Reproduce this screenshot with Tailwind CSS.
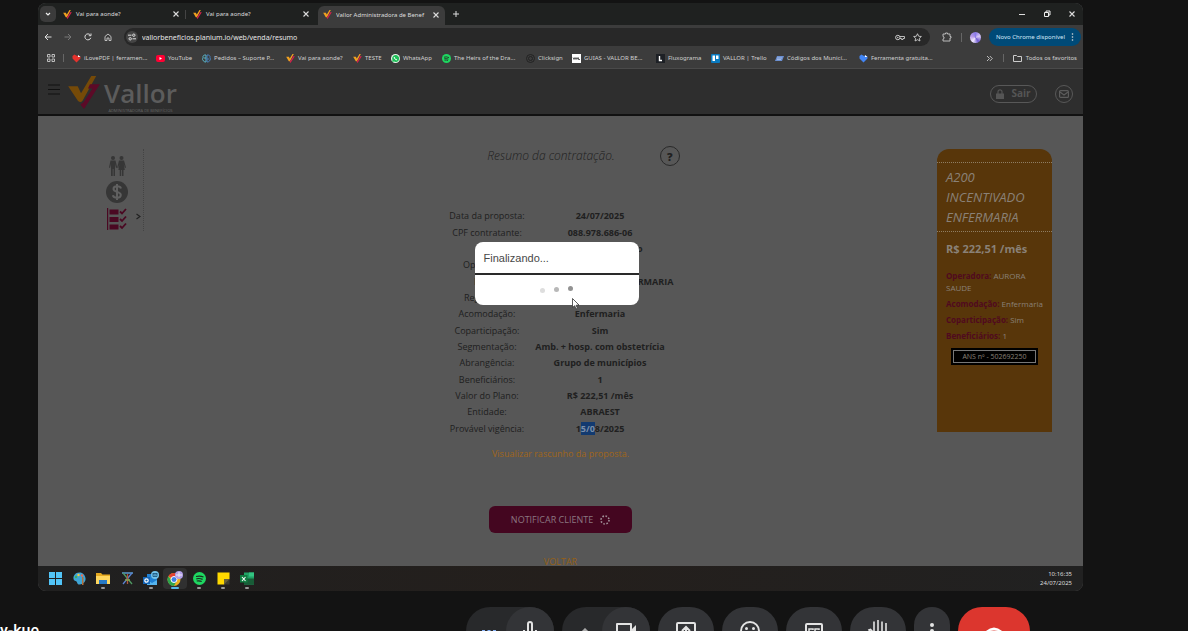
<!DOCTYPE html>
<html lang="pt-BR">
<head>
<meta charset="utf-8">
<title>Vallor Administradora de Benefícios</title>
<script src="https://cdn.jsdelivr.net/npm/@tailwindcss/browser@4"></script>
</head>
<body class="flex h-screen flex-col overflow-hidden bg-[#131313] pt-[3px] font-['Noto_Sans',sans-serif] text-[#dcdcdc]">
<svg class="hidden">
  <symbol id="vallor" viewBox="0 0 96 100"><path fill="#f0a020" d="M0 31H30L40 50L70 0H85L42 80H29Z"/><path fill="#d3204c" d="M64 25H96L48 100L38 85L72 38Z"/></symbol>
  <symbol id="x" viewBox="0 0 8 8"><path d="M1.500 1.500L6.500 6.500M6.500 1.500L1.500 6.500" stroke="currentColor" stroke-width="1.100"/></symbol>
</svg>

<main class="relative mr-[105px] ml-[38px] flex min-h-0 flex-1 flex-col overflow-hidden rounded-lg bg-[#575757]">
  <!-- Tab strip -->
  <div class="flex h-[22px] shrink-0 items-center bg-[#1f2120] pl-[2px] text-[6px] leading-none">
    <button aria-label="Pesquisar guias" class="flex size-4 items-center justify-center rounded-[5px] bg-[#3b3b3b]"><svg class="size-[6px]" viewBox="0 0 6 6"><path d="M1 2l2 2 2-2" fill="none" stroke="#eee" stroke-width="1.200"/></svg></button>
    <div class="flex w-[130px] items-center gap-[4px] pl-[7px]"><svg class="size-[9px]"><use href="#vallor"/></svg><span class="flex-1">Vai para aonde?</span><button aria-label="Fechar guia" class="mr-px size-2"><svg class="size-2"><use href="#x"/></svg></button><span class="h-[9px] w-px bg-[#444]"></span></div>
    <div class="flex w-[130px] items-center gap-[4px] pl-[7px]"><svg class="size-[9px]"><use href="#vallor"/></svg><span class="flex-1">Vai para aonde?</span><button aria-label="Fechar guia" class="mr-[6px] size-2"><svg class="size-2"><use href="#x"/></svg></button></div>
    <div class="mt-[3px] ml-[2px] flex h-[19px] w-[127px] items-center gap-[4px] rounded-t-md bg-[#3c3c3c] pr-[5px] pb-[2px] pl-[5px]"><svg class="size-[9px] shrink-0"><use href="#vallor"/></svg><span class="flex-1 overflow-hidden py-px whitespace-nowrap">Vallor Administradora de Benef</span><button aria-label="Fechar guia" class="size-2"><svg class="size-2"><use href="#x"/></svg></button></div>
    <button aria-label="Nova guia" class="ml-[7px] size-2"><svg class="size-2" viewBox="0 0 8 8"><path d="M4 1v6M1 4h6" stroke="#ddd"/></svg></button>
    <div class="mr-[7px] ml-auto flex items-center gap-[17px]">
      <button aria-label="Minimizar" class="size-2"><svg class="size-2" viewBox="0 0 8 8"><path d="M1 4.500h6" stroke="#ddd"/></svg></button>
      <button aria-label="Restaurar" class="size-2"><svg class="size-2" viewBox="0 0 8 8"><path d="M1.500 2.500h4v4h-4zM3 2.500V1h4v4H5.500" fill="none" stroke="#eee"/></svg></button>
      <button aria-label="Fechar" class="size-2"><svg class="size-2"><use href="#x"/></svg></button>
    </div>
  </div>

  <!-- Address bar -->
  <div class="flex h-6 shrink-0 items-center gap-3 bg-[#3c3c3c] pr-[2px] pl-[6px]">
    <button aria-label="Voltar" class="size-2"><svg class="size-2" viewBox="0 0 8 8"><path d="M7.500 4H1M4 1L1 4l3 3" fill="none" stroke="#ddd"/></svg></button>
    <button aria-label="Avançar" class="size-2"><svg class="size-2" viewBox="0 0 8 8"><path d="M.5 4H7M4 1l3 3-3 3" fill="none" stroke="#777"/></svg></button>
    <button aria-label="Atualizar" class="size-2"><svg class="size-2" viewBox="0 0 8 8"><path d="M6.800 4.800A3 3 0 1 1 6.300 2M7 .5v2.200H4.800" fill="none" stroke="#ddd"/></svg></button>
    <button aria-label="Página inicial" class="size-2"><svg class="size-2" viewBox="0 0 8 8"><path d="M1 3.500L4 1l3 2.500v4H5V5H3v2.500H1z" fill="none" stroke="#ccc" stroke-width=".9"/></svg></button>
    <div class="flex h-[18px] flex-1 items-center rounded-full bg-[#282828] pr-2 pl-[2px]">
      <span class="flex size-3 items-center justify-center rounded-full bg-[#444]"><svg class="size-2" viewBox="0 0 8 8"><path d="M0 2.200h3.500M4.500 5.800H8" stroke="#ddd"/><circle cx="5.800" cy="2.200" r="1.200" fill="none" stroke="#ddd"/><circle cx="2.200" cy="5.800" r="1.200" fill="none" stroke="#ddd"/></svg></span>
      <input aria-label="Endereço" value="vallorbeneficios.planium.io/web/venda/resumo" class="ml-1 h-4 flex-1 bg-transparent text-[7px] text-[#e6e6e6] outline-none">
      <svg class="mr-2 h-[7px] w-[10px]" viewBox="0 0 10 7"><circle cx="2.800" cy="3.500" r="2.200" fill="none" stroke="#ccc"/><circle cx="2.800" cy="3.500" r=".7" fill="#ccc"/><path d="M5 2.500h4.500v2H8v1H6.500v-1H5" fill="none" stroke="#ccc" stroke-width=".9"/></svg>
      <svg class="size-[9px]" viewBox="0 0 10 10"><path d="M5 .8l1.300 2.800 3 .3-2.200 2 .6 3L5 7.400 2.300 8.900l.6-3-2.200-2 3-.3z" fill="none" stroke="#ddd" stroke-width=".9"/></svg>
    </div>
    <div class="flex items-center gap-2">
      <button aria-label="Extensões" class="mr-px size-[10px]"><svg class="size-[10px]" viewBox="0 0 10 10"><path d="M1 2h2.500V1h2v1H8v2.500h1v1.500H8v3H1V7l1-.5V5L1 4.500z" fill="none" stroke="#bbb"/></svg></button>
      <span class="h-[9px] w-px bg-[#666]"></span>
      <span class="size-[11px] rounded-full bg-[conic-gradient(#8b7be8,#d9c8f5,#6f5ad0,#f2eaff,#b79be8,#8b7be8)]"></span>
      <button class="flex h-[18px] items-center justify-between gap-[6px] rounded-full bg-[#004a77] px-[7px] text-[6px] text-[#d3e8f8]"><span class="whitespace-nowrap">Novo Chrome disponível</span><svg class="h-2 w-[3px]" viewBox="0 0 3 8" fill="#ddd"><circle cx="1.500" cy="1" r=".8"/><circle cx="1.500" cy="4" r=".8"/><circle cx="1.500" cy="7" r=".8"/></svg></button>
    </div>
  </div>

  <!-- Bookmarks -->
  <nav class="flex h-5 shrink-0 items-center border-b border-[#4a4a4a] bg-[#3c3c3c] pr-[6px] pb-px pl-[9px] text-[6px] whitespace-nowrap text-[#d0d0d0]">
    <svg class="size-2 shrink-0" viewBox="0 0 8 8"><path d="M.5.5h2.500v2.500H.5zM5 .5h2.500v2.500H5zM.5 5h2.500v2.500H.5zM5 5h2.500v2.500H5z" fill="none" stroke="#ccc" stroke-width=".9"/></svg>
    <span class="mx-2 h-2 w-px shrink-0 bg-[#666]"></span>
    <a href="#" class="flex w-[84px] shrink-0 items-center gap-[3px]"><svg class="size-[9px]" viewBox="0 0 9 9"><path d="M4.500 8.500L.5 4.500V2L2.500.5l2 1.200H7L8.500 3v1.500z" fill="#e5322d"/><path d="M6 1l2.500 2H6z" fill="#fff"/></svg>iLovePDF | ferramen...</a>
    <a href="#" class="flex w-[46px] shrink-0 items-center gap-[3px]"><svg class="h-[7px] w-[9px]" viewBox="0 0 9 7"><rect width="9" height="7" rx="2" fill="#f03"/><path d="M3.500 2v3l2.500-1.500z" fill="#fff"/></svg>YouTube</a>
    <a href="#" class="flex w-[84px] shrink-0 items-center gap-[3px]"><svg class="size-[9px]" viewBox="0 0 9 9" fill="none"><path d="M4 1H3a2 2 0 0 0-2 2.500A1.500 1.500 0 0 0 1 6c.3 1.500 1.500 2 3 2zM1.500 4H4" stroke="#5bb5c5"/><path d="M5 1h1a2 2 0 0 1 2 2.500A1.500 1.500 0 0 1 8 6c-.3 1.500-1.500 2-3 2zM5 5h2.500" stroke="#477fb8"/></svg>Pedidos – Suporte P...</a>
    <a href="#" class="flex w-[67px] shrink-0 items-center gap-[3px]"><svg class="size-[9px]"><use href="#vallor"/></svg>Vai para aonde?</a>
    <a href="#" class="flex w-[38px] shrink-0 items-center gap-[3px]"><svg class="size-[9px]"><use href="#vallor"/></svg>TESTE</a>
    <a href="#" class="flex w-[51px] shrink-0 items-center gap-[3px]"><svg class="size-[9px]" viewBox="0 0 9 9"><circle cx="4.500" cy="4.500" r="4.500" fill="#e8f5ea"/><path d="M1 8l.5-2A3.500 3.500 0 1 1 3 7.600z" fill="#20c05a"/><path d="M3.200 3c0 1.500 1.500 3 2.800 2.800" fill="none" stroke="#fff"/></svg>WhatsApp</a>
    <a href="#" class="flex w-[84px] shrink-0 items-center gap-[3px]"><svg class="size-[9px]" viewBox="0 0 9 9"><circle cx="4.500" cy="4.500" r="4.500" fill="#1ed760"/><path d="M2 3.200q2.500-.8 5 .4M2.200 4.800q2.300-.6 4.200.3M2.500 6.200q2-.5 3.500.3" fill="none" stroke="#222" stroke-width=".8"/></svg>The Heirs of the Dra...</a>
    <a href="#" class="flex w-[46px] shrink-0 items-center gap-[3px]"><svg class="size-[9px]" viewBox="0 0 9 9" fill="none" stroke="#222"><circle cx="4.500" cy="4.500" r="4"/><circle cx="4.500" cy="4.500" r="2"/></svg>Clicksign</a>
    <a href="#" class="flex w-[84px] shrink-0 items-center gap-[3px]"><svg class="size-[9px]" viewBox="0 0 9 9"><path fill="#fff" d="M0 0h9v9H0z"/><path d="M1 3.500l1 2 1-2 1 2 1-2 1 2M6.500 3.500v2H8" fill="none" stroke="#333" stroke-width=".8"/></svg>GUIAS - VALLOR BE...</a>
    <a href="#" class="flex w-[55px] shrink-0 items-center gap-[3px]"><svg class="size-[9px]" viewBox="0 0 9 9"><path fill="#1d2025" d="M0 0h9v9H0z"/><path d="M3.500 2v4.500H6" fill="none" stroke="#fff" stroke-width="1.400"/></svg>Fluxograma</a>
    <a href="#" class="flex w-[64px] shrink-0 items-center gap-[3px]"><svg class="size-[9px]" viewBox="0 0 9 9"><rect width="9" height="9" rx="1" fill="#0a7abf"/><path fill="#fff" d="M1.500 1.500H4v5.500H1.500zM5 1.500h2.500V5H5z"/></svg>VALLOR | Trello</a>
    <a href="#" class="flex w-[84px] shrink-0 items-center gap-[3px]"><svg class="h-[9px] w-[9px]" viewBox="0 0 9 9"><path d="M2 2h7L7 7H0z" fill="#6b8fd0"/><path d="M2 4h5M2 5.500h4" stroke="#c5d4f0" stroke-width=".6"/></svg>Códigos dos Municí...</a>
    <a href="#" class="flex shrink-0 items-center gap-[3px]"><svg class="size-[9px]" viewBox="0 0 9 9"><path d="M4.500 8.500L.5 4.500V2L2.500.5l2 1.200H7L8.500 3v1.500z" fill="#4285f4"/><path d="M6 1l2.500 2H6z" fill="#fff"/></svg>Ferramenta gratuita...</a>
    <div class="ml-auto flex items-center">
      <svg class="size-[7px]" viewBox="0 0 7 7"><path d="M1 1l2.500 2.500L1 6M3.800 1l2.500 2.500L3.800 6" fill="none" stroke="#ccc" stroke-width=".9"/></svg>
      <span class="mr-[9px] ml-[10px] h-2 w-px bg-[#666]"></span>
      <a href="#" class="flex items-center gap-1"><svg class="h-[7px] w-[9px]" viewBox="0 0 9 7"><path d="M.5 6.500v-6H3.500l1 1h4v5z" fill="none" stroke="#ccc"/></svg>Todos os favoritos</a>
    </div>
  </nav>

  <!-- Site header -->
  <header class="flex h-[47px] shrink-0 items-center border-b-2 border-[#111] bg-[#2e2e2e] pr-[10px] pl-[10px] font-['Open_Sans',sans-serif]">
    <button aria-label="Menu" class="mb-1 h-[11px] w-3"><svg class="h-[11px] w-3" viewBox="0 0 12 11"><path d="M0 1h12M0 5.500h12M0 10h12" stroke="#111"/></svg></button>
    <a href="#" class="mt-[5px] ml-[8px] flex items-start">
      <svg class="h-[33px] w-8" viewBox="0 0 96 100"><path fill="#754a08" d="M0 31H29L39 52L70 0H85L44 74Q38 82 30 76Z"/><path fill="#5c0a27" d="M66 25H96L48 100L37 86L46 80L74 38H60Z"/></svg>
      <span class="ml-1 flex flex-col items-center"><span class="pt-px text-[26px] leading-[32px] font-semibold text-[#5c5c5c]">Vallor</span><span class="text-[4px] leading-[4px] whitespace-nowrap text-[#666]">ADMINISTRADORA DE BENEFÍCIOS</span></span>
    </a>
    <div class="mt-[4px] ml-auto flex items-center gap-[18px]">
      <button class="flex h-[18px] w-[47px] items-center justify-center gap-[7px] rounded-full border border-[#585858] text-[10px] font-bold text-[#555]"><svg class="h-[10px] w-2" viewBox="0 0 8 10"><path d="M0 4.500h8V10H0z" fill="#555"/><path d="M2 5V2.800a2 2 0 0 1 4 0V5" fill="none" stroke="#555" stroke-width="1.200"/></svg>Sair</button>
      <button aria-label="Mensagens" class="flex size-[18px] items-center justify-center rounded-full border border-[#585858]"><svg class="h-2 w-[10px]" viewBox="0 0 10 8"><rect x=".6" y=".6" width="8.800" height="6.800" rx="1" fill="none" stroke="#5c5c5c" stroke-width="1.200"/><path d="M1 2l4 3 4-3" fill="none" stroke="#5c5c5c" stroke-width="1.200"/></svg></button>
    </div>
  </header>

  <!-- Contract summary -->
  <section class="grid min-h-0 flex-1 grid-cols-[146px_1fr_146px] overflow-hidden font-['Open_Sans',sans-serif] text-[#202020]">
    <aside class="pt-[33px]">
      <div class="flex h-[82px] w-[106px] items-center justify-end border-r border-dotted border-[#444] pt-[6px]">
        <div class="flex flex-col items-center gap-[5px] pr-[12px]">
          <svg class="h-5 w-[17px]" viewBox="0 0 17 20" fill="#363636"><circle cx="4" cy="2" r="2"/><circle cx="12.500" cy="2" r="2"/><path d="M1.500 4.500h5l1.700 7-1.200.5-1-4V20H4.500v-7h-.8v7H2V8l-1 4-1-.5zM10 4.500h5l2 7-1 .5-1.200-4 1 6H14.500v6H13v-6h-.8v6h-1.500v-6H9.400l1-6-1.200 4-1-.5z"/></svg>
          <svg class="size-[22px]" viewBox="0 0 22 22"><circle cx="11" cy="11" r="11" fill="#363636"/><path d="M15 7.500C14 4.500 7.500 4.600 7.500 8c0 3.600 7.300 2.200 7.300 6 0 3.600-7 3.600-8 .2M11 3v16" fill="none" stroke="#606060" stroke-width="2"/></svg>
          <svg class="h-[22px] w-5" viewBox="0 0 20 22"><path d="M.6 0v22" stroke="#4a0822" stroke-width="1.200"/><path d="M2.500 1.500h9v5h-9zM2.500 9h9v5h-9zM2.500 16.500h9v5h-9z" fill="#4a0822"/><path d="M13 3.500l2 2L19 1M13 11l2 2 4-4.500M13 18l2 2 4-4.500" fill="none" stroke="#4a0822" stroke-width="1.800"/></svg>
        </div>
        <svg class="mt-[46px] mr-[2px] -ml-[4px] h-[7px] w-[5px]" viewBox="0 0 5 6"><path d="M.5.5L4 3 .5 5.500" fill="none" stroke="#222" stroke-width="1.200"/></svg>
      </div>
    </aside>

    <div class="flex flex-col items-center pt-[30px]">
      <div class="flex items-center gap-[45px] pl-[46px]">
        <h1 class="text-[12px] leading-5 font-light whitespace-nowrap italic">Resumo da contratação.</h1>
        <button aria-label="Ajuda" class="flex size-5 items-center justify-center rounded-full border border-[#292929] text-[11px] leading-none font-extrabold">?</button>
      </div>
      <table class="mt-[42px] h-[229px] w-[226px] table-fixed text-center text-[9px] leading-[14px] whitespace-nowrap">
        <colgroup><col class="w-[79px]"><col class="w-[147px]"></colgroup>
        <tbody>
          <tr><td>Data da proposta:</td><td class="font-bold">24/07/2025</td></tr>
          <tr><td>CPF contratante:</td><td class="font-bold">088.978.686-06</td></tr>
          <tr><td></td><td class="font-bold">Titular do contrato</td></tr>
          <tr><td>Operadora:</td><td class="font-bold">AURORA</td></tr>
          <tr><td>Plano:</td><td class="font-bold">A200 INCENTIVADO ENFERMARIA</td></tr>
          <tr><td>Reg. Plano:</td><td class="font-bold">502692250</td></tr>
          <tr><td>Acomodação:</td><td class="font-bold">Enfermaria</td></tr>
          <tr><td>Coparticipação:</td><td class="font-bold">Sim</td></tr>
          <tr><td>Segmentação:</td><td class="font-bold">Amb. + hosp. com obstetrícia</td></tr>
          <tr><td>Abrangência:</td><td class="font-bold">Grupo de municípios</td></tr>
          <tr><td>Beneficiários:</td><td class="font-bold">1</td></tr>
          <tr><td>Valor do Plano:</td><td class="font-bold">R$ 222,51 /mês</td></tr>
          <tr><td>Entidade:</td><td class="font-bold">ABRAEST</td></tr>
          <tr><td>Provável vigência:</td><td class="font-bold">1<span class="bg-[#123a70] text-[#7c8fa8]">5/0</span>8/2025</td></tr>
        </tbody>
      </table>
      <a href="#" class="mt-[9px] text-[9px] leading-4 text-[#a0661a]">Visualizar rascunho da proposta.</a>
      <button class="mt-[44px] flex h-[27px] w-[143px] shrink-0 items-center justify-center gap-[7px] rounded-md bg-[#440620] text-[9px] text-[#8b7680]">NOTIFICAR CLIENTE<svg class="size-[10px]" viewBox="0 0 10 10"><circle cx="5" cy="5" r="4" fill="none" stroke="#a08f97" stroke-width="1.600" stroke-dasharray="1.600 1.540"/></svg></button>
      <a href="#" class="mt-[23px] text-[9px] leading-[11px] text-[#966015]">VOLTAR</a>
    </div>

    <aside class="pt-[33px]">
      <div class="h-[283px] w-[115px] rounded-t-xl bg-[#58360a] pt-[13px] text-[#8a8177]">
        <h2 class="border-y border-dotted border-[#8f7d62] px-[9px] pt-[4px] pb-[4px] text-[13px] leading-[20px] italic">A200 INCENTIVADO ENFERMARIA</h2>
        <p class="mt-[9px] px-[9px] text-[11px] leading-4 font-bold">R$ 222,51 /mês</p>
        <div class="mt-[13px] flex flex-col gap-[4px] pr-[5px] pl-[9px] text-[8px] leading-[12px]">
          <p><b class="text-[#50091f]">Operadora:</b> AURORA SAUDE</p>
          <p class="whitespace-nowrap"><b class="text-[#50091f]">Acomodação:</b> Enfermaria</p>
          <p><b class="text-[#50091f]">Coparticipação:</b> Sim</p>
          <p><b class="text-[#50091f]">Beneficiários:</b> 1</p>
        </div>
        <p class="mx-auto mt-[6px] w-[87px] border border-black bg-black p-px"><span class="block border border-[#777] text-center text-[7px] leading-[11px]">ANS nº - 502692250</span></p>
      </div>
    </aside>
  </section>

  <!-- Windows taskbar -->
  <footer class="flex h-[25px] shrink-0 items-center bg-linear-to-r from-[#202020] via-[#241f1c] to-[#212121] pr-[11px] pl-[5px]">
    <button aria-label="Iniciar" class="flex w-6 justify-center"><svg class="size-[13px]" viewBox="0 0 13 13"><path d="M0 0h6v6H0zM7 0h6v6H7zM0 7h6v6H0zM7 7h6v6H7z" fill="#52c5f8"/></svg></button>
    <button aria-label="Paint" class="flex w-6 justify-center"><svg class="size-[13px]" viewBox="0 0 13 13"><path d="M6.500.5C2 .5 0 4 .5 7c.3 2 2 1.500 3 2.500s.5 3 3 3C11 12 13 9 12.500 6S10 .5 6.500.5z" fill="#3fa5d5"/><circle cx="3" cy="5" r="1.200" fill="#3db35a"/><circle cx="5.500" cy="3" r="1.200" fill="#f6c845"/><circle cx="9" cy="3.500" r="1.200" fill="#e66b52"/><path d="M9 5h1.500v8H9z" fill="#b6703a"/></svg></button>
    <button aria-label="Explorador de Arquivos" class="relative flex w-6 justify-center"><svg class="h-[13px] w-[14px]" viewBox="0 0 14 13"><path d="M0 1h5l1.500 1.500H14V12H0z" fill="#e5a920"/><path d="M0 4h14v8H0z" fill="#ffd75e"/><path d="M3 8h8v4H3z" fill="#2779c4"/></svg><span class="absolute -bottom-[4px] h-[2px] w-1 rounded-full bg-[#999]"></span></button>
    <button aria-label="Ferramenta" class="flex w-6 justify-center"><svg class="size-[13px]" viewBox="0 0 13 13" fill="none" stroke-width="1.300"><path d="M1 1h11" stroke="#5a9ad0"/><path d="M2 1l9 11" stroke="#4f9b62"/><path d="M11 1L2 12" stroke="#5a82d0"/><path d="M6.500 2v10" stroke="#b0553c"/><path d="M4 8h5" stroke="#85a04b"/></svg></button>
    <button aria-label="Outlook" class="relative flex w-6 justify-center"><svg class="h-[15px] w-[16px]" viewBox="0 0 16 15"><path d="M4 3h10v11H4z" fill="#1f7fd2"/><path d="M4 9l5 3 5-3v5H4z" fill="#55b4ee"/><path d="M0 6h7v7H0z" fill="#1464b4"/><circle cx="3.500" cy="9.500" r="1.700" fill="none" stroke="#fff" stroke-width="1.200"/><circle cx="12" cy="4" r="4" fill="#72c3ec"/><path d="M10 2.500h4v3h-4zl2 2 2-2" fill="none" stroke="#154b73" stroke-width=".8"/></svg><span class="absolute -bottom-[3px] h-[2px] w-1 rounded-full bg-[#999]"></span></button>
    <button aria-label="Chrome" class="relative flex h-[21px] w-6 items-center justify-center rounded-sm bg-[#303030]"><svg class="h-[15px] w-4" viewBox="0 0 16 15"><circle cx="7" cy="8.500" r="6.500" fill="#eaaf20"/><path d="M7 8.500L1.400 5.200A6.500 6.500 0 0 1 12.600 5.200z" fill="#e34133"/><path d="M1.400 5.200A6.500 6.500 0 0 0 7 15l2.500-5-5-.5z" fill="#2da54e"/><circle cx="7" cy="8.500" r="3" fill="#3c7fe8" stroke="#fff" stroke-width="1"/><circle cx="12" cy="4" r="4" fill="#b3a0e8"/><path d="M9 4h6M12 1v5" stroke="#eee"/></svg><span class="absolute bottom-0 h-[2px] w-2 rounded-full bg-[#56b9ea]"></span></button>
    <button aria-label="Spotify" class="relative flex w-6 justify-center"><svg class="size-[13px]" viewBox="0 0 13 13"><circle cx="6.500" cy="6.500" r="6.500" fill="#1ed760"/><path d="M3 4.500q4-1 7.500.5M3.300 6.800q3.500-.8 6.300.6M3.700 9q2.800-.6 5 .5" fill="none" stroke="#1b2a20" stroke-width="1.200"/></svg><span class="absolute -bottom-[4px] h-[2px] w-1 rounded-full bg-[#999]"></span></button>
    <button aria-label="Notas" class="relative flex w-6 justify-center"><svg class="size-[13px]" viewBox="0 0 13 13"><path d="M.5.500h12V7L7 12.500H.5z" fill="#ffd900"/><path d="M12.500 7v5.500H7V7z" fill="#3b3b30"/><path d="M12.500 7L7 12.500V7z" fill="#66603a"/></svg><span class="absolute -bottom-[4px] h-[2px] w-1 rounded-full bg-[#999]"></span></button>
    <button aria-label="Excel" class="relative flex w-6 justify-center"><svg class="h-[13px] w-[14px]" viewBox="0 0 14 13"><path d="M4 .5h10v12H4z" fill="#21a366"/><path d="M9 .5h5v4H9z" fill="#33c481"/><path d="M4 6.500h10v6H4z" fill="#185c37"/><path d="M0 3h7.500v7.500H0z" fill="#107c41"/><path d="M2 5l3.500 4M5.500 5L2 9" stroke="#fff" stroke-width="1.100"/></svg><span class="absolute -bottom-[4px] h-[2px] w-1 rounded-full bg-[#999]"></span></button>
    <div class="ml-auto text-right text-[6px] leading-[9px] text-[#ddd]">10:16:35<br>24/07/2025</div>
  </footer>

  <!-- Progress dialog -->
  <div role="dialog" aria-label="Finalizando" class="absolute top-[239px] left-[calc(50%-86px)] w-[164px] rounded-lg bg-white font-['Liberation_Sans',sans-serif] text-[11px] text-[#484848]">
    <p class="border-b-2 border-[#2a2a2a] px-[9px] pt-[8px] pb-[7px] leading-4">Finalizando...</p>
    <div class="flex h-[30px] items-center justify-center gap-[9px]">
      <span class="size-[5px] rounded-full bg-[#dedede]"></span><span class="mb-[2px] size-[5px] rounded-full bg-[#b8b8b8]"></span><span class="mb-[4px] size-[5px] rounded-full bg-[#929292]"></span>
    </div>
    <svg class="absolute top-[56px] left-[97px] h-[12px] w-2" viewBox="0 0 8 12"><path d="M.5.5v9l2.200-1.800L4 11l1.500-.7-1.400-3L7 7z" fill="#fff" stroke="#333" stroke-width=".8"/></svg>
  </div>
</main>

<!-- Call controls -->
<footer class="flex h-10 shrink-0 items-start overflow-hidden pt-4">
  <p class="w-[466px] pt-[12px] font-['Roboto',sans-serif] text-[16px] leading-6 font-medium text-white">y-kue</p>
  <div class="flex shrink-0 gap-2 text-[#e3e3e3]">
    <div class="flex h-12 w-[88px] rounded-full bg-[#28292b]"><button aria-label="Opções de áudio" class="flex w-10 justify-center pt-[23px] pl-[6px]"><svg class="h-1 w-4" viewBox="0 0 16 4" fill="#8ab4f8"><path d="M1 0h3v4H1zM6.500 0h3v4h-3zM12 0h3v4h-3z"/></svg></button><button aria-label="Microfone" class="flex size-12 justify-center rounded-full bg-[#333437] pt-3"><svg class="size-6" viewBox="0 0 24 24" fill="none" stroke="currentColor" stroke-width="2"><rect x="10" y="3" width="4" height="11" rx="2"/><path d="M6 11a6 6 0 0 0 12 0M12 17v4"/></svg></button></div>
    <div class="flex h-12 w-[88px] rounded-full bg-[#28292b]"><button aria-label="Opções de vídeo" class="flex w-10 justify-center pt-[21px] pl-[6px]"><svg class="h-[6px] w-[10px]" viewBox="0 0 10 6"><path d="M1 5l4-4 4 4" fill="none" stroke="#aaa" stroke-width="1.500"/></svg></button><button aria-label="Câmera" class="flex size-12 justify-center rounded-full bg-[#333437] pt-3"><svg class="size-6" viewBox="0 0 24 24"><path d="M3 5h14v14H3z" fill="none" stroke="currentColor" stroke-width="2" stroke-linejoin="round"/><path d="M17 11l5-5v12l-5-5z" fill="currentColor"/></svg></button></div>
    <button aria-label="Apresentar" class="flex h-12 w-14 justify-center rounded-full bg-[#333437] pt-3"><svg class="size-6" viewBox="0 0 24 24" fill="none" stroke="currentColor" stroke-width="2"><rect x="3" y="4" width="18" height="16" rx="1"/><path d="M12 17V8M8 12l4-4 4 4"/></svg></button>
    <button aria-label="Reações" class="flex h-12 w-14 justify-center rounded-full bg-[#333437] pt-3"><svg class="size-6" viewBox="0 0 24 24"><circle cx="12" cy="12" r="9" fill="none" stroke="currentColor" stroke-width="2"/><circle cx="8.500" cy="9.500" r="1.500" fill="currentColor"/><circle cx="15.500" cy="9.500" r="1.500" fill="currentColor"/><path d="M7 14q5 5 10 0" fill="none" stroke="currentColor" stroke-width="2"/></svg></button>
    <button aria-label="Legendas" class="flex h-12 w-14 justify-center rounded-full bg-[#333437] pt-3"><svg class="size-6" viewBox="0 0 24 24" fill="none" stroke="currentColor" stroke-width="2"><rect x="4" y="5" width="16" height="14" rx="1"/><path d="M11 11v-1H7v4h4v-1M17 11v-1h-4v4h4v-1" stroke-width="1.500"/></svg></button>
    <button aria-label="Levantar a mão" class="flex h-12 w-14 justify-center rounded-full bg-[#333437] pt-3"><svg class="size-6" viewBox="0 0 24 24" fill="none" stroke="currentColor" stroke-width="1.600"><path d="M8 12V2.500M12 12V1M16 12V2.500M20 4v12q0 6-7 6-4 0-6-4l-4-7 1.500-.5L8 14"/></svg></button>
    <button aria-label="Mais opções" class="flex h-12 w-9 justify-center rounded-full bg-[#333437] pt-3"><svg class="size-6" viewBox="0 0 24 24" fill="currentColor"><circle cx="12" cy="6" r="2"/><circle cx="12" cy="12" r="2"/><circle cx="12" cy="18" r="2"/></svg></button>
    <button aria-label="Sair da chamada" class="flex h-12 w-[72px] justify-center rounded-full bg-[#dc362e] pt-3 text-white"><svg class="size-6" viewBox="0 0 24 24"><path d="M1 15Q12 2 23 15l-3 3-4-3v-3q-4-1-8 0v3l-4 3z" fill="currentColor"/></svg></button>
  </div>
</footer>
</body>
</html>
